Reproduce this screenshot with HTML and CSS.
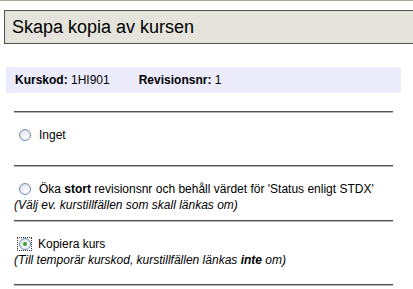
FILE: index.html
```html
<!DOCTYPE html>
<html lang="sv">
<head>
<meta charset="utf-8">
<title>Skapa kopia av kursen</title>
<link rel="stylesheet" href="styles.css">
</head>
<body>
<div class="page">
  <div class="header">Skapa kopia av kursen</div>
  <div class="info">
    <span><b>Kurskod:</b> 1HI901</span>
    <span><b>Revisionsnr:</b> 1</span>
  </div>
  <div class="opts">
    <hr class="sep">
    <div class="sec sec1">
      <div class="row"><span class="radio"></span><span>Inget</span></div>
    </div>
    <hr class="sep">
    <div class="sec sec2">
      <div class="row"><span class="radio"></span><span>Öka <b>stort</b> revisionsnr och behåll värdet för 'Status enligt STDX'</span></div>
      <div class="note">(Välj ev. kurstillfällen som skall länkas om)</div>
    </div>
    <hr class="sep">
    <div class="sec sec3">
      <div class="row"><span class="focus"><span class="radio checked"></span></span><span>Kopiera kurs</span></div>
      <div class="note">(Till temporär kurskod, kurstillfällen länkas <b>inte</b> om)</div>
    </div>
    <hr class="sep">
  </div>
</div>
</body>
</html>
```
FILE: styles.css
```css
html, body {
  margin: 0;
  padding: 0;
  background: #fff;
}
body {
  font-family: "Liberation Sans", Arial, sans-serif;
  font-size: 12px;
  color: #000;
}
.page {
  border-top: 1px solid #a8a898;
}
.header {
  margin: 9px 0 0 4px;
  height: 32px;
  line-height: 32px;
  border: 1px solid #505050;
  border-right: none;
  background: #e4e4dc;
  font-size: 18px;
  padding-left: 7px;
  color: #000;
}
.info {
  margin: 23px 0 0 6px;
  width: 386px;
  height: 26px;
  line-height: 26px;
  background: #ebebfb;
  padding-left: 9px;
  display: flex;
  gap: 29px;
}
.opts {
  margin: 18px 0 0 14px;
  width: 379px;
}
.sep {
  margin: 0;
  height: 0;
  border: none;
  border-top: 1px solid #555;
  border-bottom: 1px solid #b4b4b4;
}
.sec1 { padding: 14px 0 22px; }
.sec2 { padding: 14px 0 7px; }
.sec3 { padding: 14px 0 16px; }
.row {
  display: flex;
  align-items: center;
  height: 16px;
  line-height: 16px;
}
.note {
  height: 16px;
  line-height: 16px;
  font-style: italic;
}
.radio {
  box-sizing: border-box;
  width: 12px;
  height: 12px;
  border-radius: 50%;
  border: 1px solid #6f8fb0;
  background: radial-gradient(circle at 65% 70%, #ffffff 0%, #eef0f4 40%, #cfd6e0 100%);
  margin: 0 8px 0 5px;
  flex: none;
  position: relative;
}
.focus {
  display: flex;
  align-items: center;
  margin: 0 6px 0 3px;
  padding: 1px;
  outline: 1px dotted #333;
  outline-offset: -1px;
}
.focus .radio {
  margin: 0 0 0 1px;
}
.radio.checked::after {
  content: "";
  position: absolute;
  left: 3px;
  top: 3px;
  width: 4px;
  height: 4px;
  border-radius: 50%;
  background: #2ea52e;
}
```
